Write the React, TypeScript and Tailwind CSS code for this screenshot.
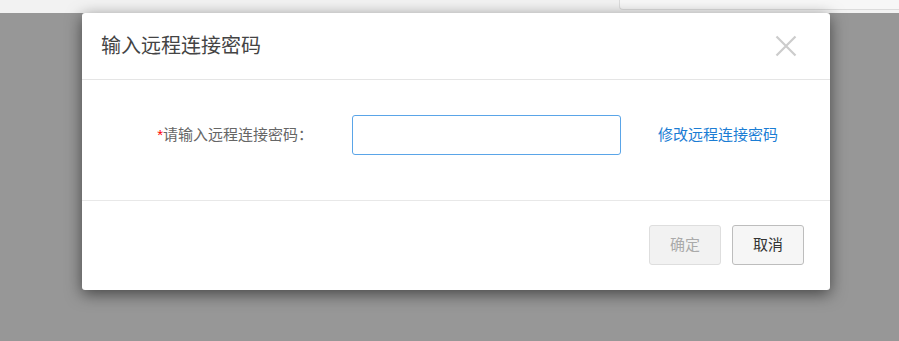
import { useState } from 'react';

export default function App() {
  const [pwd, setPwd] = useState('');

  return (
    <div
      className="w-[899px] h-[341px] flex flex-col overflow-hidden bg-[#979797]"
      style={{ fontFamily: '"Liberation Sans", "Noto Sans CJK SC", sans-serif' }}
    >
      {/* page strip behind the mask */}
      <div className="h-[13px] shrink-0 bg-[#f2f2f2] flex justify-end">
        <div className="w-[280px] h-[10px] bg-[#f7f7f7] border-l border-b border-[#dcdcdc] rounded-bl-[4px]" />
      </div>

      <div className="ml-[82px] w-[748px] bg-white rounded-[3px] shadow-[0_4px_16px_rgba(0,0,0,0.55)]">
        <div className="h-[67px] flex items-center justify-between pl-[19px] pr-[33px] border-b border-[#e5e5e5]">
          <h3 className="text-[20px] leading-[24px] text-[#444] font-normal">输入远程连接密码</h3>
          <button className="w-[22px] h-[22px] flex items-center justify-center">
            <svg width="22" height="22" viewBox="0 0 22 22">
              <path d="M1.5 1.5 L20.5 20.5 M20.5 1.5 L1.5 20.5" stroke="#cccccc" strokeWidth="2.2" />
            </svg>
          </button>
        </div>

        <div className="pt-[35px] pb-[45px] flex items-center border-b border-[#e8e8e8]">
          <label className="w-[231px] text-right text-[15px] leading-[20px] text-[#666]">
            <span className="text-[#f00]">*</span>请输入远程连接密码：
          </label>
          <input
            type="password"
            value={pwd}
            onChange={(e) => setPwd(e.target.value)}
            className="ml-[39px] w-[269px] h-[40px] rounded-[3px] border border-[#5aa5e8] outline-none px-2 text-[14px]"
          />
          <a href="#" className="ml-[37px] text-[15px] leading-[20px] text-[#1b7dd4]">
            修改远程连接密码
          </a>
        </div>

        <div className="pt-[24px] pb-[25px] pr-[26px] flex justify-end gap-[11px]">
          <button
            disabled
            className="w-[72px] h-[40px] rounded-[3px] border border-[#dedede] bg-[#f2f2f2] text-[15px] text-[#aaa]"
          >
            确定
          </button>
          <button className="w-[72px] h-[40px] rounded-[3px] border border-[#bdbdbd] bg-[#f6f6f6] text-[15px] text-[#333]">
            取消
          </button>
        </div>
      </div>
    </div>
  );
}
